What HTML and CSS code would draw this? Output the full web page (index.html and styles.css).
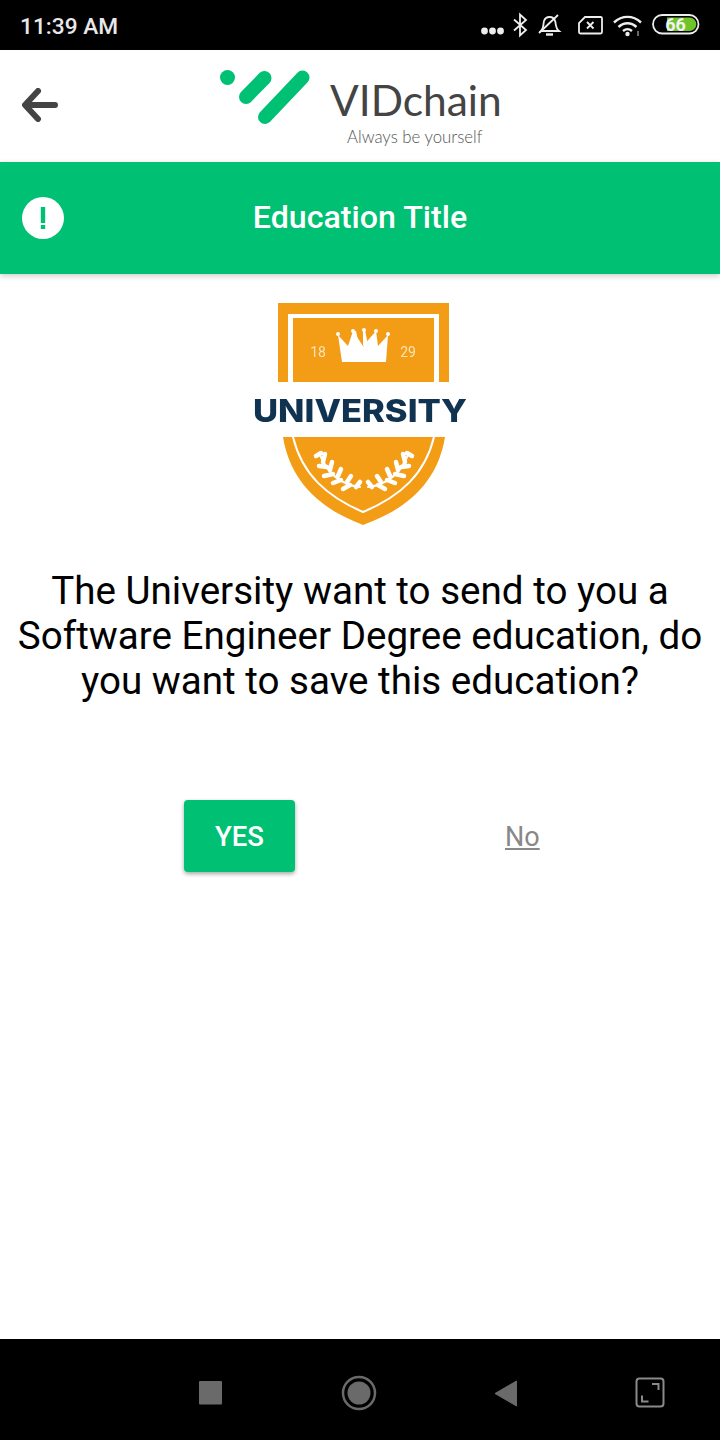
FILE: index.html
```html
<!DOCTYPE html>
<html lang="en">
<head>
<meta charset="utf-8">
<title>VIDchain - Education Title</title>
<link rel="stylesheet" href="styles.css">
</head>
<body>
<div class="screen">
  <div class="status">
    <span class="time">11:39 AM</span>
    <svg class="status-icons" width="240" height="50" viewBox="480 0 240 50">
      <g fill="#eee"><circle cx="484.500" cy="31" r="3.400"/><circle cx="492.500" cy="31" r="3.400"/><circle cx="500.500" cy="31" r="3.400"/></g>
      <path d="M514 19.500L526 30 520 35.500V14.500L526 20 514 30.500" fill="none" stroke="#eee" stroke-width="1.800"/>
      <g fill="none" stroke="#eee" stroke-width="1.800">
        <path d="M541 31c3-3 2-6 3-10 1-3 3-4 5.500-4s5 1.500 5.800 4.500c.7 4 .5 7 3.700 9.500z"/>
        <path d="M546 34.500h7" stroke-width="2.400"/>
        <path d="M539 33L558 15"/>
      </g>
      <g fill="none" stroke="#eee" stroke-width="1.800">
        <path d="M585 17h15.500a1.500 1.500 0 0 1 1.500 1.500V32a1.500 1.500 0 0 1-1.500 1.500H580.500A1.500 1.500 0 0 1 579 32V23z"/>
        <path d="M587 22l6.500 6.500M593.500 22L587 28.500"/>
      </g>
      <g fill="none" stroke="#eee" stroke-width="2.400">
        <path d="M614 22.500c8-7.500 19-7.500 27 0"/>
        <path d="M618.500 27c5.500-5 12.500-5 18 0"/>
        <path d="M623 31c3-2.500 6-2.500 9 0"/>
      </g>
      <circle cx="627.500" cy="34" r="2.200" fill="#eee"/>
      <path d="M638 31v5" stroke="#888" stroke-width="1.500"/>
      <rect x="653" y="15" width="45.500" height="18.500" rx="9.200" fill="none" stroke="#eee" stroke-width="1.800"/>
      <path d="M667 17.500h22.500a6.800 6.800 0 0 1 0 13.600H667z" fill="#6fc42a"/>
      <text class="batt" x="675.500" y="31" text-anchor="middle">66</text>
    </svg>
  </div>

  <header class="topbar">
    <svg class="back" width="36" height="34" viewBox="0 0 36 34">
      <path d="M16 3L3 17 16 31M4 17H33" fill="none" stroke="#444" stroke-width="6" stroke-linecap="round" stroke-linejoin="round"/>
    </svg>
    <svg class="brand" width="290" height="80" viewBox="218 68 290 80">
      <circle cx="227.500" cy="77.500" r="7.500" fill="#00c073"/>
      <path d="M246 97L264.500 78M265 117L302.500 77.500" fill="none" stroke="#00c073" stroke-width="14" stroke-linecap="round"/>
      <text class="brand-name" x="330" y="115.500">VIDchain</text>
      <text class="brand-tag" x="347" y="143">Always be yourself</text>
    </svg>
  </header>

  <section class="banner">
    <svg class="alert" width="42" height="42" viewBox="0 0 42 42">
      <circle cx="21" cy="21" r="21" fill="#fff"/>
      <rect x="18.800" y="10" width="4.400" height="16" fill="#00c073"/>
      <rect x="18.800" y="28" width="4.400" height="4" fill="#00c073"/>
    </svg>
    <h1 class="banner-title">Education Title</h1>
  </section>

  <main class="content">
    <svg class="crest" width="260" height="250" viewBox="0 0 260 250">
      <path d="M48 13H219V92H209V24H58V92H48z" fill="#f39c16"/>
      <rect x="63" y="28" width="141" height="64" fill="#f39c16"/>
      <g fill="#fff">
        <path d="M112 72L108 45 118 56 123 41 133 56 146 41 148 56 158 45 156 72z"/>
        <path d="M124 41h2l3 14h-5zM133 40h2l3 15h-5z"/>
        <circle cx="108" cy="44" r="2"/><circle cx="123" cy="41" r="2"/><circle cx="134" cy="40" r="2"/><circle cx="146" cy="41" r="2"/><circle cx="158" cy="44" r="2"/>
      </g>
      <text class="crest-year" x="88" y="67" text-anchor="middle">18</text>
      <text class="crest-year" x="178" y="67" text-anchor="middle">29</text>
      <text class="crest-name" x="130" y="132" text-anchor="middle" textLength="214" lengthAdjust="spacingAndGlyphs">UNIVERSITY</text>
      <path d="M53 147H215C208 190 180 218 133 235 88 218 60 190 53 147z" fill="#f39c16"/>
      <path d="M63 147C72 184 96 206 133 222 171 206 195 184 204 147" fill="none" stroke="#fff" stroke-width="2"/>
      <g fill="none" stroke="#fff" stroke-linecap="round">
        <path d="M130 197C112 195 98 184 90 165" stroke-width="2"/>
        <path d="M138 197C156 195 170 184 178 165" stroke-width="2"/>
        <path d="M91 163l-5 3M97 177l-8-1M103 184l-9 2M111 190l-8 3M120 195l-7 4M93 172l2-8M100 180l2-8M108 186l3-7M117 192l4-6M126 197l4-5" stroke-width="4.500"/>
        <path d="M177 163l5 3M171 177l8-1M165 184l9 2M157 190l8 3M148 195l7 4M175 172l-2-8M168 180l-2-8M160 186l-3-7M151 192l-4-6M142 197l-4-5" stroke-width="4.500"/>
      </g>
    </svg>
    <p class="question">The University want to send to you a Software Engineer Degree education, do you want to save this education?</p>
    <div class="actions">
      <button class="yes" type="button">YES</button>
      <a class="no" href="#">No</a>
    </div>
  </main>

  <footer class="navbar">
    <svg width="720" height="101" viewBox="0 1339 720 101">
      <rect x="199" y="1381" width="23" height="23.500" rx="1" fill="#6a6a6a"/>
      <circle cx="359" cy="1393" r="16" fill="none" stroke="#6a6a6a" stroke-width="2.500"/>
      <circle cx="359" cy="1393" r="11.500" fill="#6a6a6a"/>
      <path d="M495 1393.500L516.500 1381V1406z" fill="#6a6a6a" stroke="#6a6a6a" stroke-linejoin="round"/>
      <rect x="636.500" y="1378.500" width="27" height="28" rx="3" fill="none" stroke="#8a8a8a" stroke-width="2"/>
      <path d="M652 1384h6.500v6M642 1395.500v6h6.500" fill="none" stroke="#8a8a8a" stroke-width="2"/>
    </svg>
  </footer>
</div>
</body>
</html>
```

FILE: styles.css
```css
* { box-sizing: border-box; }
html, body { margin: 0; padding: 0; background: #fff; }
.screen {
  width: 720px;
  height: 1440px;
  display: flex;
  flex-direction: column;
  overflow: hidden;
  font-family: Roboto, "Liberation Sans", sans-serif;
}
.status {
  flex: none;
  height: 50px;
  background: #000;
  display: flex;
  align-items: center;
  justify-content: space-between;
  padding: 2px 0 0 20px;
}
.time { color: #e8e8e8; font-size: 22.700px; font-weight: 500; }
.status-icons { display: block; margin-top: -2px; }
.batt { font: 700 18px Roboto, sans-serif; fill: #f2f2f2; }
.topbar {
  flex: none;
  height: 112px;
  background: #fff;
  display: flex;
  align-items: flex-start;
}
.back { margin: 38px 0 0 22px; display: block; }
.brand { margin: 18px 0 0 160px; display: block; }
.brand-name { font: 400 42.500px Lato, sans-serif; fill: #444; }
.brand-tag { font: 300 16.800px Lato, sans-serif; fill: #555; }
.banner {
  flex: none;
  height: 112px;
  background: #00c073;
  position: relative;
  display: flex;
  align-items: center;
  justify-content: center;
  padding-bottom: 2px;
  box-shadow: 0 2px 6px rgba(0, 0, 0, .2);
}
.alert { position: absolute; left: 22px; top: 35px; }
.banner-title { margin: 0; color: #fff; font-size: 32.200px; font-weight: 500; }
.content {
  flex: 1;
  display: flex;
  flex-direction: column;
  align-items: center;
  background: #fff;
}
.crest { display: block; margin-top: 16px; flex: none; filter: blur(.4px); }
.crest-year { font: 400 14px Roboto, sans-serif; fill: #fbe3b8; }
.crest-name { font: 800 31px Inter, sans-serif; fill: #0f3350; }
.question {
  margin: 28px 0 0;
  width: 720px;
  text-align: center;
  font-size: 38.600px;
  line-height: 45px;
  color: #000;
}
.actions {
  margin-top: 97px;
  align-self: stretch;
  display: flex;
  align-items: center;
  padding-left: 184px;
}
.yes {
  width: 111px;
  height: 72px;
  border: 0;
  border-radius: 4px;
  background: #00c073;
  color: #fff;
  font: 500 27.500px Roboto, sans-serif;
  box-shadow: 0 2px 4px rgba(0, 0, 0, .35);
  padding: 0;
}
.no {
  margin-left: 210px;
  padding-top: 2px;
  color: #888;
  font-size: 27px;
  text-decoration: underline;
}
.navbar { flex: none; height: 101px; background: #000; }
.navbar svg { display: block; }
```
